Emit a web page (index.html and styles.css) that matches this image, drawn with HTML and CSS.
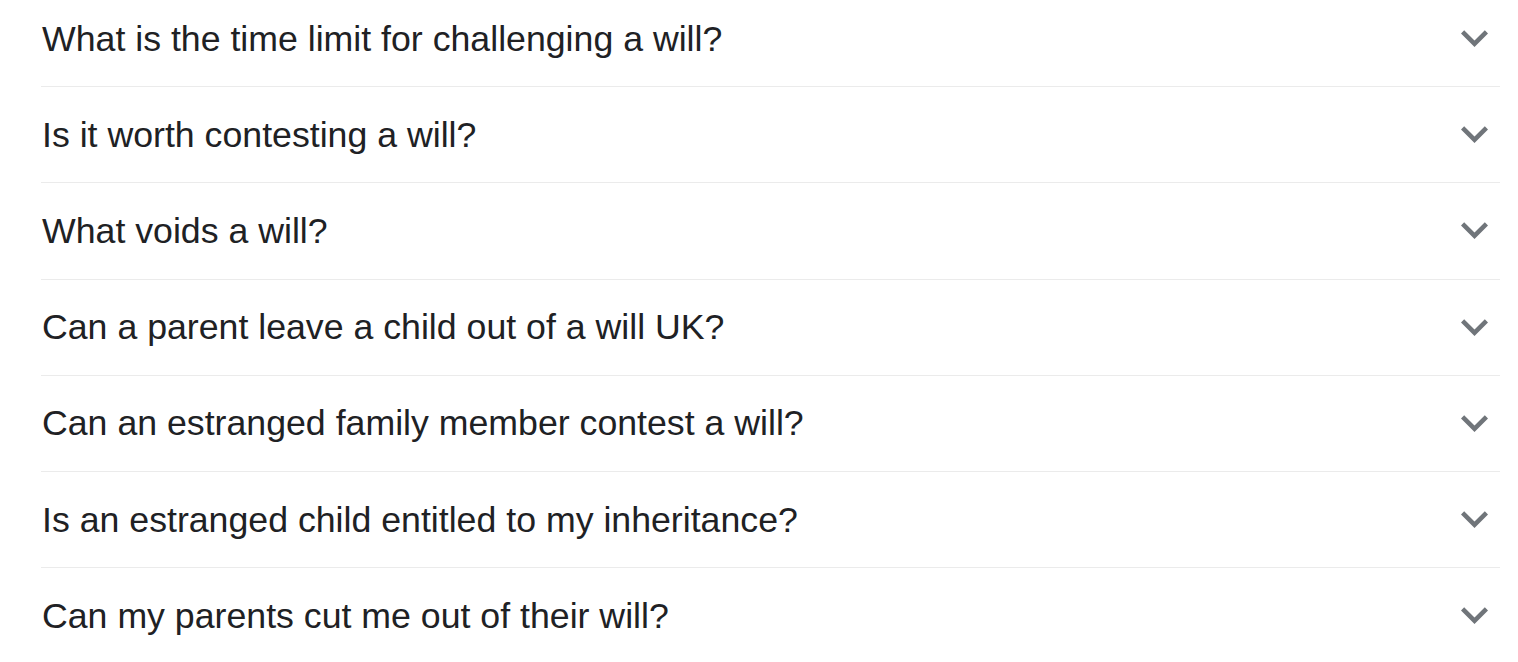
FILE: index.html
```html
<!DOCTYPE html>
<html>
<head>
<meta charset="utf-8">
<link rel="stylesheet" href="styles.css">
</head>
<body>
<div class="faq">
  <div class="row"><span class="q">What is the time limit for challenging a will?</span><svg class="chev" viewBox="6 8.5 12 7.5"><path d="M16.59 8.59L12 13.17 7.41 8.59 6 10l6 6 6-6z"/></svg></div>
  <div class="row"><span class="q">Is it worth contesting a will?</span><svg class="chev" viewBox="6 8.5 12 7.5"><path d="M16.59 8.59L12 13.17 7.41 8.59 6 10l6 6 6-6z"/></svg></div>
  <div class="row"><span class="q">What voids a will?</span><svg class="chev" viewBox="6 8.5 12 7.5"><path d="M16.59 8.59L12 13.17 7.41 8.59 6 10l6 6 6-6z"/></svg></div>
  <div class="row"><span class="q">Can a parent leave a child out of a will UK?</span><svg class="chev" viewBox="6 8.5 12 7.5"><path d="M16.59 8.59L12 13.17 7.41 8.59 6 10l6 6 6-6z"/></svg></div>
  <div class="row"><span class="q">Can an estranged family member contest a will?</span><svg class="chev" viewBox="6 8.5 12 7.5"><path d="M16.59 8.59L12 13.17 7.41 8.59 6 10l6 6 6-6z"/></svg></div>
  <div class="row"><span class="q">Is an estranged child entitled to my inheritance?</span><svg class="chev" viewBox="6 8.5 12 7.5"><path d="M16.59 8.59L12 13.17 7.41 8.59 6 10l6 6 6-6z"/></svg></div>
  <div class="row"><span class="q">Can my parents cut me out of their will?</span><svg class="chev" viewBox="6 8.5 12 7.5"><path d="M16.59 8.59L12 13.17 7.41 8.59 6 10l6 6 6-6z"/></svg></div>
</div>
</body>
</html>
```
FILE: styles.css
```css
html, body {
  margin: 0;
  padding: 0;
  background: #ffffff;
  overflow: hidden;
}
.faq {
  margin: -9px 0 0 41px;
  width: 1459px;
  font-family: "Liberation Sans", Arial, sans-serif;
}
.row {
  display: flex;
  align-items: center;
  justify-content: space-between;
  height: 95.2px;
  border-bottom: 1px solid #ebebeb;
}
.q {
  font-size: 35.7px;
  color: #202124;
  line-height: 48px;
  padding-left: 1px;
}
.chev {
  width: 27px;
  height: 17px;
  margin-right: 12px;
  fill: #70757a;
}
```
